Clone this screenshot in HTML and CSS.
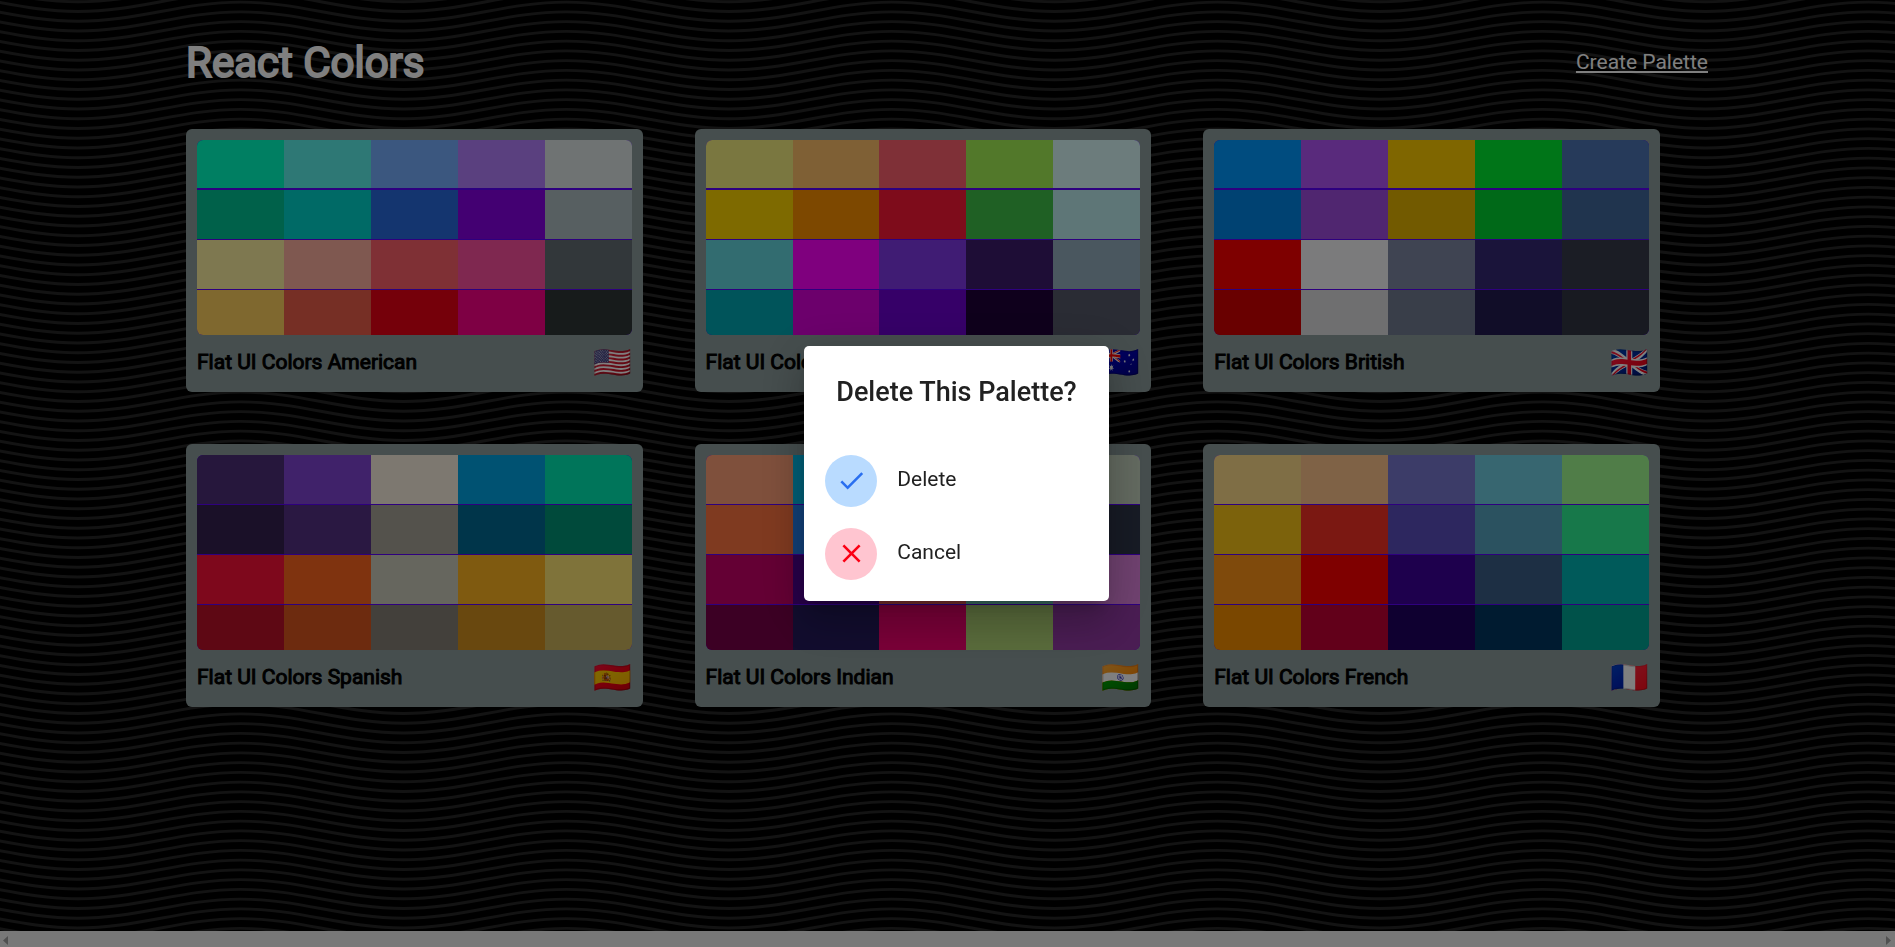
FILE: index.html
```html
<!DOCTYPE html>
<html lang="en">
<head>
<meta charset="utf-8">
<title>React Colors</title>
<link rel="stylesheet" href="styles.css">
</head>
<body>
<div class="page">
  <main class="container">
    <header class="nav">
      <h1 class="nav-title">React Colors</h1>
      <a class="nav-link" href="#new">Create Palette</a>
    </header>
    <section class="palettes" id="palettes"></section>
  </main>
  <div class="scrollbar">
    <svg width="16" height="16" viewBox="0 0 16 16"><path d="M8 5v9l-5-4.500z"/></svg>
    <svg width="16" height="16" viewBox="0 0 16 16"><path d="M7 5v9l5-4.500z"/></svg>
  </div>
</div>
<div class="backdrop">
  <div class="dialog" role="dialog" aria-modal="true" aria-labelledby="dialog-title">
    <h2 class="dialog-title" id="dialog-title">Delete This Palette?</h2>
    <div class="dialog-list">
      <button class="dialog-item" type="button">
        <span class="avatar avatar-confirm"><svg viewBox="0 0 24 24"><path d="M9 16.170L4.830 12l-1.420 1.410L9 19 21 7l-1.410-1.410z"/></svg></span>
        <span class="dialog-text">Delete</span>
      </button>
      <button class="dialog-item" type="button">
        <span class="avatar avatar-cancel"><svg viewBox="0 0 24 24"><path d="M19 6.410L17.590 5 12 10.590 6.410 5 5 6.410 10.590 12 5 17.590 6.410 19 12 13.410 17.590 19 19 17.590 13.410 12z"/></svg></span>
        <span class="dialog-text">Cancel</span>
      </button>
    </div>
  </div>
</div>
<script src="app.js"></script>
</body>
</html>
```
FILE: app.js
```js
const palettes = [
  { name: "Flat UI Colors American", emoji: "🇺🇸", colors:
    "00ffc4 5cf0ea 76aefe b480fe dee6e6 00c294 00d4cc 286ade 8600e4 aebec2 fcf0a0 ffb0a0 fe606a ff50a0 646e74 ffd05e ec5e4a ea0014 fc0088 2e3636" },
  { name: "Flat UI Colors Australian", emoji: "🇦🇺", colors:
    "f4ee80 ffc06a fe606e a4f054 d8f8f8 fcd400 fa9000 fc1836 3ec048 bcecee 64d8e0 fe00fc 8038e8 3c1a6c 94aebe 00a8b4 d800d8 6c00d0 1e0038 545868" },
  { name: "Flat UI Colors British", emoji: "🇬🇧", colors:
    "0098ff b254f8 ffcc00 00ea30 4c74b4 0084e4 a04ce0 e4b400 00d230 40689c fc0000 f6f6f8 7e88a4 342874 363a4a d20000 dedee0 727c92 221a50 303442" },
  { name: "Flat UI Colors Spanish", emoji: "🇪🇸", colors:
    "4c2e78 8044d4 faf0e0 00a4e4 00eab4 342050 543084 a8a498 006a94 009476 fc1038 ff661e ccccbc ffb420 ffe674 bc1028 da561e 868076 d2901e ccb45c" },
  { name: "Flat UI Colors Indian", emoji: "🇮🇳", colors:
    "ffa078 00beee ff8cc0 ffe070 c8d6c2 ff7440 2480f0 ff3060 80e040 2e364a c80068 500094 f45e58 74dac0 e084e0 780048 241a5c f40070 b4d878 943aa6" },
  { name: "Flat UI Colors French", emoji: "🇫🇷", colors:
    "fedc8a ffc48c 7878d0 6ecce0 a0fa90 f8c418 f63024 5a4ebe 56a4c0 2ef094 ff9418 ff0000 3c009a 3a5e88 00b4b4 f48e00 c40034 1e0060 003660 00a494" }
];

const list = document.getElementById("palettes");
for (const palette of palettes) {
  const card = document.createElement("article");
  card.className = "palette";
  const swatches = palette.colors.split(" ")
    .map(c => `<div class="swatch" style="background:#${c}"></div>`).join("");
  card.innerHTML = `<div class="swatches">${swatches}</div>
    <h3 class="palette-title"><span>${palette.name}</span><span class="flag">${palette.emoji}</span></h3>`;
  list.append(card);
}
```
FILE: styles.css
```css
* { box-sizing: border-box; }

body {
  margin: 0;
  background: #000;
  font-family: Roboto, "Liberation Sans", sans-serif;
  font-size: 21px;
}

.page {
  display: flex;
  flex-direction: column;
  min-height: 100vh;
  background-color: #000;
  background-image: url("data:image/svg+xml,%3Csvg xmlns='http://www.w3.org/2000/svg' width='651' height='39' viewBox='0 0 651 39'%3E%3Cdefs%3E%3Cpath id='w' fill='none' stroke='%23262626' stroke-width='2.9' d='M-84.750-17.400c59 0 103.750 19.200 162.750 19.200s103.750-19.200 162.750-19.200s103.750 19.200 162.750 19.200s103.750-19.200 162.750-19.200s103.750 19.200 162.750 19.200'/%3E%3C/defs%3E%3Cuse href='%23w'/%3E%3Cuse href='%23w' y='9.750'/%3E%3Cuse href='%23w' y='19.500'/%3E%3Cuse href='%23w' y='29.250'/%3E%3Cuse href='%23w' y='39'/%3E%3Cuse href='%23w' y='48.750'/%3E%3Cuse href='%23w' y='58.500'/%3E%3C/svg%3E");
}

.container {
  flex: 1;
  padding: 0 187px 0 186px;
}

.nav {
  display: flex;
  align-items: center;
  justify-content: space-between;
  height: 129px;
  padding-bottom: 5px;
  color: #fff;
}

.nav-title {
  margin: 0;
  font-size: 42px;
  font-weight: 400;
  -webkit-text-stroke: 2px #fff;
}

.nav-link { color: #fff; }

.palettes {
  display: grid;
  grid-template-columns: repeat(3, 30%);
  gap: 52px;
}

.palette {
  padding: 11px 11px 16px;
  border-radius: 6px;
  background: #8c9c9c;
}

.swatches {
  display: grid;
  grid-template-columns: repeat(5, 1fr);
  grid-auto-rows: 49px;
  row-gap: 1px;
  height: 195px;
  overflow: hidden;
  border-radius: 6px;
  background: #5c00ff;
}

.palette:nth-child(-n+3) .swatch:nth-child(-n+5) { height: 48px; }

.palette-title {
  display: flex;
  align-items: center;
  justify-content: space-between;
  height: 41px;
  margin: 0;
  padding-top: 13px;
  font-size: 21px;
  font-weight: 400;
  -webkit-text-stroke: 1px #000;
  color: #000;
}

.flag {
  font-size: 31px;
  line-height: 1;
  -webkit-text-stroke: 0;
  filter: saturate(1.3);
}

.scrollbar {
  display: flex;
  justify-content: space-between;
  height: 16px;
  background: #f1f1f1;
  fill: #a0a0a0;
}

.backdrop {
  position: fixed;
  inset: 0;
  display: flex;
  align-items: center;
  justify-content: center;
  padding-left: 18px;
  background: rgba(0, 0, 0, 0.5);
}

.dialog {
  border-radius: 5px;
  background: #fff;
  color: #212121;
  box-shadow: 0 11px 15px -7px rgba(0, 0, 0, 0.2), 0 24px 38px 3px rgba(0, 0, 0, 0.14), 0 9px 46px 8px rgba(0, 0, 0, 0.12);
}

.dialog-title {
  margin: 0;
  padding: 25px 32px 23px;
  font-size: 27px;
  font-weight: 500;
  line-height: 42px;
}

.dialog-list { padding: 8px 0 11px; }

.dialog-item {
  display: flex;
  align-items: center;
  gap: 20px;
  width: 100%;
  height: 73px;
  padding: 0 21px;
  border: 0;
  background: none;
  color: inherit;
  font: inherit;
  text-align: left;
}

.dialog-text { padding-bottom: 3px; }

.avatar {
  display: flex;
  align-items: center;
  justify-content: center;
  width: 52px;
  height: 52px;
  border-radius: 50%;
}

.avatar svg { width: 31px; height: 31px; fill: currentColor; }
.avatar-confirm { background: #b9dbff; color: #2a6ff0; }
.avatar-cancel { background: #ffc5d0; color: #fb0014; }
```
